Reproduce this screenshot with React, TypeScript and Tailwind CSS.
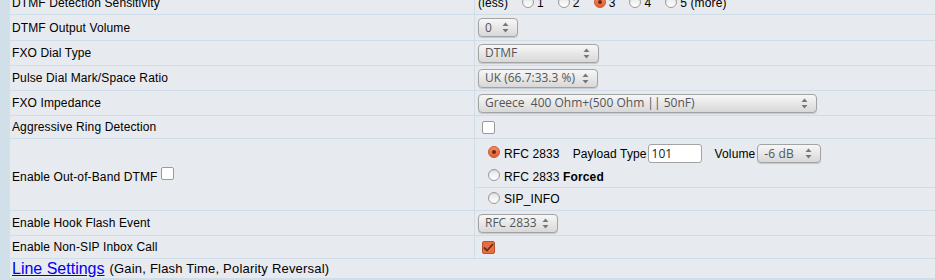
import type { ReactNode } from 'react';

const label = "font-['Liberation_Sans',Arial,sans-serif] text-[12px] tracking-[0.12px] text-black";

function Arrows() {
  return (
    <svg width="7" height="11" viewBox="0 0 7 11" className="shrink-0">
      <path d="M3.5 0.5 L6.5 4 L0.5 4 Z" fill="#777" />
      <path d="M3.5 10.5 L6.5 7 L0.5 7 Z" fill="#777" />
    </svg>
  );
}

function Select({ value, width }: { value: string; width: string }) {
  return (
    <div
      className={`${width} h-[19px] flex items-center justify-between pl-[6px] pr-[8px] rounded-[4px] border border-[#a3a3a3] bg-gradient-to-b from-[#f7f7f7] to-[#d8d8d8] shadow-[0_1px_1px_rgba(0,0,0,0.15)] font-['Open_Sans',sans-serif] text-[12px] text-[#555] whitespace-pre`}
    >
      <span className="leading-none">{value}</span>
      <Arrows />
    </div>
  );
}

function Radio({ checked = false }: { checked?: boolean }) {
  return checked ? (
    <span className="w-[12px] h-[12px] rounded-full border border-[#c9542d] bg-gradient-to-b from-[#f58a63] to-[#e35f33] flex items-center justify-center shrink-0">
      <span className="block w-[4px] h-[4px] rounded-full bg-[#6b2a14]" />
    </span>
  ) : (
    <span className="block w-[12px] h-[12px] rounded-full border border-[#9a9a9a] bg-gradient-to-b from-[#e6e6e6] to-white shadow-[inset_0_1px_1px_rgba(0,0,0,0.08)] shrink-0" />
  );
}

function Checkbox({ checked = false }: { checked?: boolean }) {
  return checked ? (
    <span className="w-[13px] h-[13px] rounded-[2px] border border-[#b8532f] bg-[#ec6c41] flex items-center justify-center shrink-0">
      <svg width="11" height="9" viewBox="0 0 11 9">
        <path d="M1 4.5 L4 7.5 L10 1" stroke="#5a3324" strokeWidth="1.8" fill="none" />
      </svg>
    </span>
  ) : (
    <span className="block w-[13px] h-[13px] rounded-[2px] border border-[#9a9a9a] bg-white shrink-0" />
  );
}

function Row({ name, h, children }: { name: ReactNode; h: string; children?: ReactNode }) {
  return (
    <div className={`flex ${h} border-b border-[#cfdde9]`}>
      <div className={`w-[465px] shrink-0 flex items-center pl-[2px] border-r border-[#cfdde9] ${label}`}>{name}</div>
      <div className="flex-1 flex items-center pl-[3px]">{children}</div>
    </div>
  );
}

export default function App() {
  return (
    <div className="w-[935px] h-[280px] overflow-hidden flex bg-[#d1dfe8]">
      <div className="w-[10px] shrink-0" />
      <div className="flex-1 flex flex-col">
        <div className="-mt-[8px] bg-[#e7eaee]">
          <Row name="DTMF Detection Sensitivity" h="h-[23px]">
            <div className={`flex items-center ${label}`}>
              <span>(less)</span>
              {['1', '2', '3', '4', '5 (more)'].map((n) => (
                <span key={n} className="flex items-center">
                  <span className="block ml-[14px] -mt-[3px]">
                    <Radio checked={n === '3'} />
                  </span>
                  <span className="ml-[3px]">{n}</span>
                </span>
              ))}
            </div>
          </Row>
          <Row name="DTMF Output Volume" h="h-[26px]">
            <Select value="0" width="w-[40px]" />
          </Row>
          <Row name="FXO Dial Type" h="h-[25px]">
            <Select value="DTMF" width="w-[121px]" />
          </Row>
          <Row name="Pulse Dial Mark/Space Ratio" h="h-[25px]">
            <Select value="UK (66.7:33.3 %)" width="w-[120px]" />
          </Row>
          <Row name="FXO Impedance" h="h-[25px]">
            <Select value="Greece  400 Ohm+(500 Ohm || 50nF)" width="w-[339px]" />
          </Row>
          <Row name="Aggressive Ring Detection" h="h-[23px]">
            <span className="block ml-[4px]">
              <Checkbox />
            </span>
          </Row>
          <div className="flex h-[72px] border-b border-[#cfdde9]">
            <div className={`w-[465px] shrink-0 flex items-center pl-[2px] pt-[4px] border-r border-[#cfdde9] ${label}`}>
              Enable Out-of-Band DTMF
              <span className="block ml-[4px] -mt-[6px]">
                <Checkbox />
              </span>
            </div>
            <div className={`flex-1 flex flex-col ${label}`}>
              <div className="h-[27px] flex items-center pl-[13px] pt-[2px]">
                <span className="block -mt-[3px]">
                  <Radio checked />
                </span>
                <span className="ml-[4px]">RFC 2833</span>
                <span className="ml-[13px]">Payload Type</span>
                <div className="ml-[1px] w-[54px] h-[19px] rounded-[3px] border border-[#a3a3a3] bg-white flex items-center pl-[3px] font-['Open_Sans',sans-serif] text-[12px] text-[#222] tracking-normal">
                  101
                </div>
                <span className="ml-[13px]">Volume</span>
                <div className="ml-[2px]">
                  <Select value="-6 dB" width="w-[64px]" />
                </div>
              </div>
              <div className="h-[22px] flex items-center pl-[13px] border-b border-[#cfdde9]">
                <span className="block -mt-[3px]">
                  <Radio />
                </span>
                <span className="ml-[4px]">
                  RFC 2833 <b>Forced</b>
                </span>
              </div>
              <div className="h-[22px] flex items-center pl-[13px]">
                <span className="block -mt-[3px]">
                  <Radio />
                </span>
                <span className="ml-[4px]">SIP_INFO</span>
              </div>
            </div>
          </div>
          <Row name="Enable Hook Flash Event" h="h-[25px]">
            <Select value="RFC 2833" width="w-[80px]" />
          </Row>
          <Row name="Enable Non-SIP Inbox Call" h="h-[23px]">
            <span className="block ml-[4px]">
              <Checkbox checked />
            </span>
          </Row>
          <div className="h-[20px] flex items-center pl-[2px] border-b border-[#cfdde9] font-['Liberation_Sans',Arial,sans-serif]">
            <a href="#" className="text-[16px] text-[#0000ee] underline leading-none">
              Line Settings
            </a>
            <span className="ml-[5px] text-[13px] tracking-[0.2px] text-black">(Gain, Flash Time, Polarity Reversal)</span>
          </div>
        </div>
      </div>
    </div>
  );
}
